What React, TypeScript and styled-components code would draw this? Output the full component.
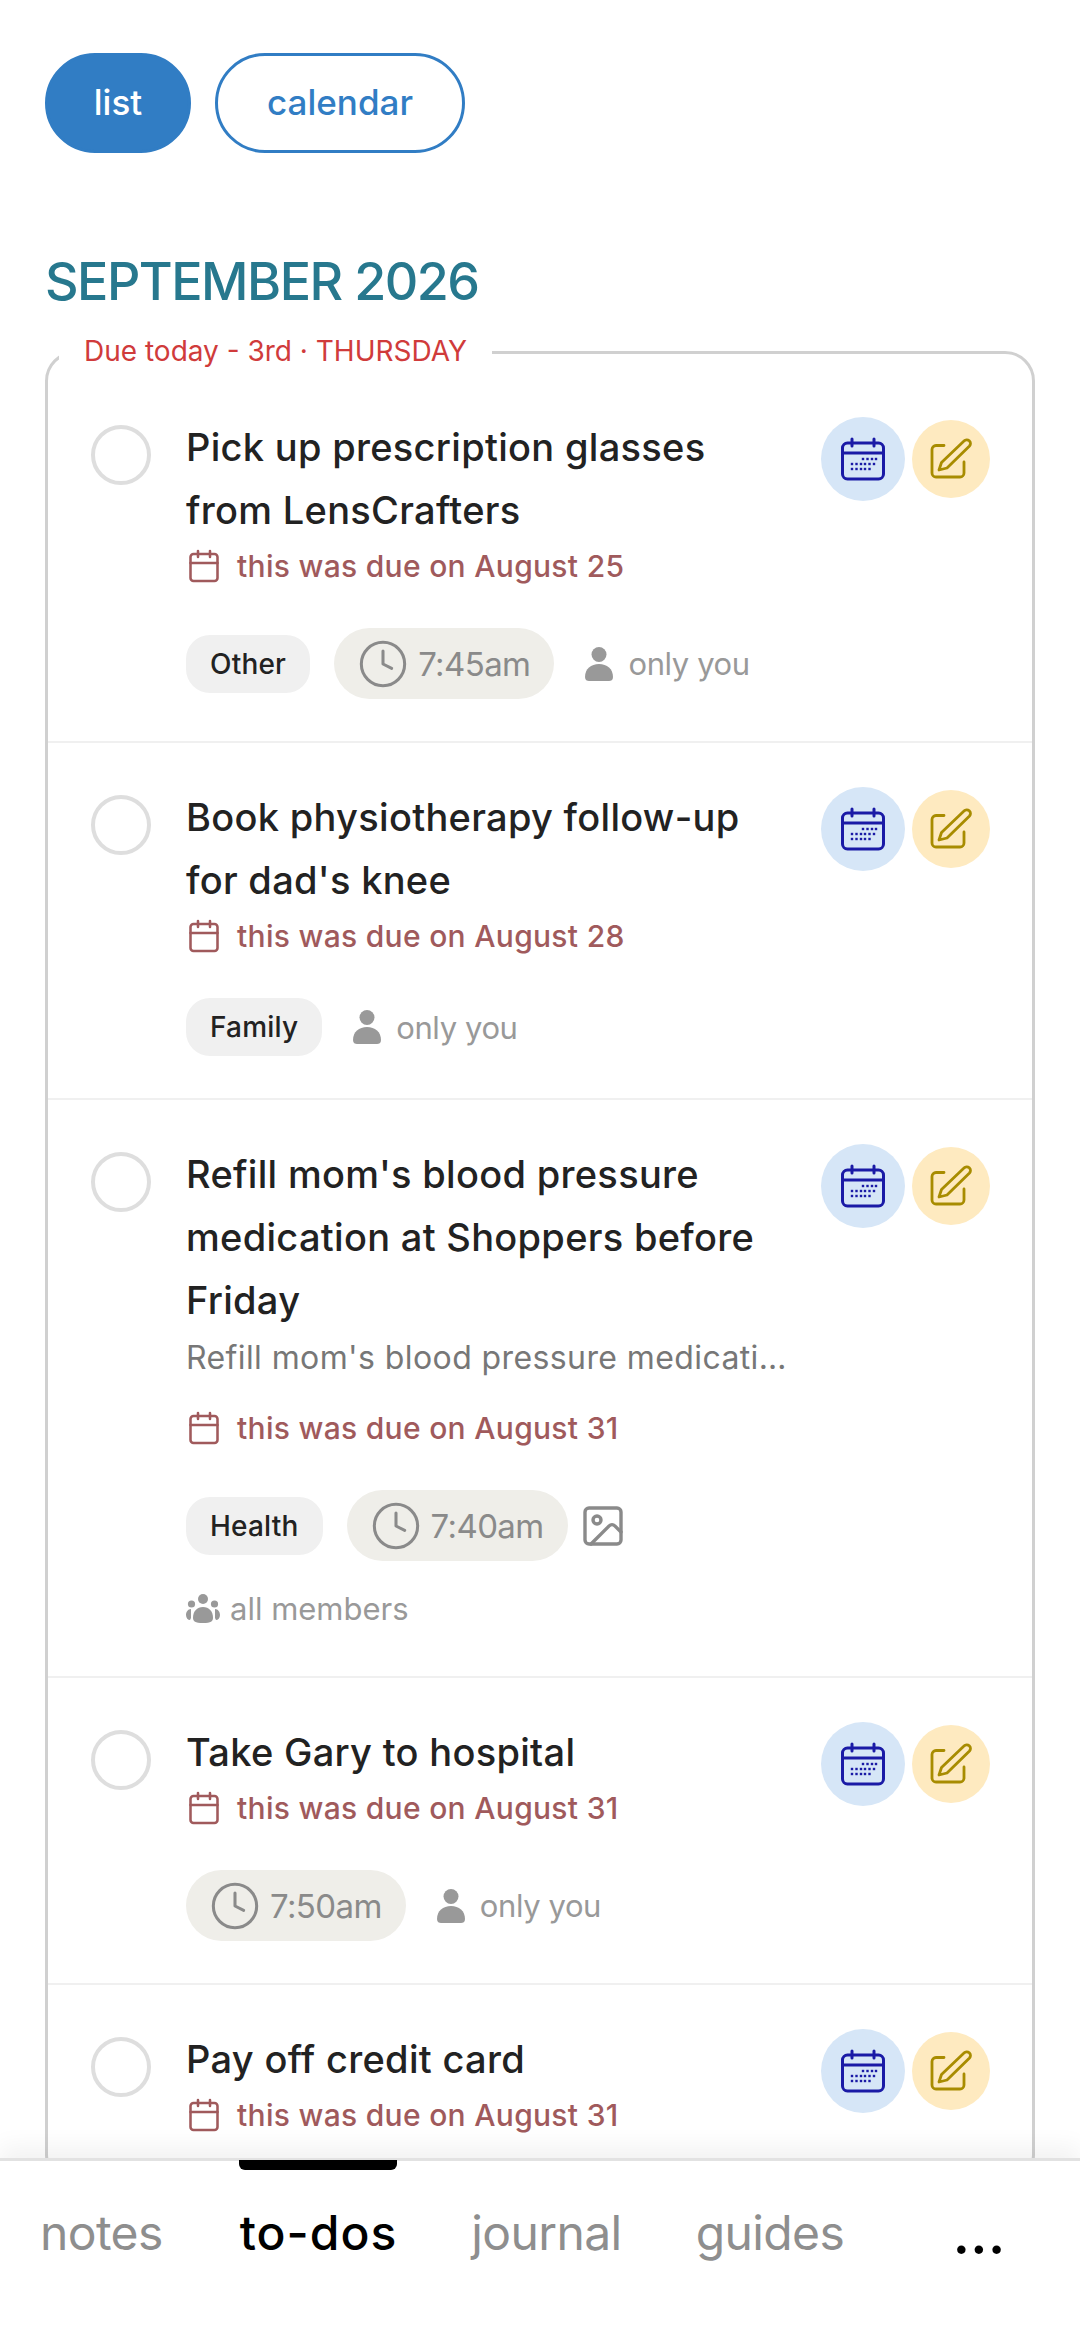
import styled, { createGlobalStyle } from "styled-components";
import { Calendar, Clock, Image as ImageIcon } from "lucide-react";

const GlobalStyle = createGlobalStyle`
    html, body {
        margin: 0;
        padding: 0;
        background: #fff;
    }
    * {
        box-sizing: border-box;
    }
`;

const Screen = styled.div`
    width: 1080px;
    height: 2340px;
    display: flex;
    flex-direction: column;
    overflow: hidden;
    font-family: Inter, "Noto Sans", sans-serif;
    color: #222;
`;

const Content = styled.main`
    flex: 1;
    min-height: 0;
    overflow: hidden;
    padding: 53px 45px 0 45px;
`;

const Toggle = styled.div`
    display: flex;
    gap: 24px;
`;

const ToggleButton = styled.div<{ $active?: boolean }>`
    height: 100px;
    width: ${(p) => (p.$active ? "146px" : "250px")};
    padding-bottom: 2px;
    display: flex;
    align-items: center;
    justify-content: center;
    border-radius: 50px;
    border: 3px solid #317dc4;
    background: ${(p) => (p.$active ? "#317dc4" : "#fff")};
    color: ${(p) => (p.$active ? "#fff" : "#317dc4")};
    font-size: 35px;
    font-weight: 500;
`;

const MonthTitle = styled.h2`
    margin: 99px 0 0;
    height: 60px;
    line-height: 60px;
    font-size: 52px;
    font-weight: 500;
    color: #27788e;
    letter-spacing: -1.5px;
`;

const Card = styled.section`
    position: relative;
    margin-top: 39px;
    border: 3px solid #d0d0d0;
    border-radius: 30px;
    padding-top: 19px;
`;

const CardLegend = styled.div`
    position: absolute;
    top: -22px;
    left: 11px;
    padding: 0 25px;
    background: #fff;
    font-size: 28px;
    line-height: 38px;
    color: #d03b3b;
`;

const Row = styled.article`
    display: flex;
    padding: 43px 42px 42px 43px;
    border-top: 2px solid #f0f0f0;

    &:first-of-type {
        border-top: none;
    }
`;

const Check = styled.div`
    flex: none;
    width: 60px;
    height: 60px;
    margin-top: 9px;
    border: 4px solid #dedede;
    border-radius: 50%;
`;

const Body = styled.div`
    flex: 1;
    min-width: 0;
    margin-left: 35px;
`;

const Title = styled.h3`
    margin: 0;
    font-size: 38px;
    line-height: 63px;
    font-weight: 500;
    color: #222;
    letter-spacing: 0.3px;
    width: 600px;
`;

const Note = styled.p`
    margin: 0 0 20px;
    font-size: 32px;
    line-height: 52px;
    color: #777;
    letter-spacing: 0.4px;
    max-width: 604px;
    white-space: nowrap;
    overflow: hidden;
    text-overflow: ellipsis;
`;

const Due = styled.div`
    display: flex;
    align-items: center;
    gap: 15px;
    height: 48px;
    font-size: 30px;
    font-weight: 500;
    color: #a05a5c;
    letter-spacing: 0.3px;
`;

const Meta = styled.div`
    display: flex;
    align-items: center;
    gap: 24px;
    margin-top: 38px;
`;

const Tag = styled.span`
    height: 58px;
    padding: 0 24px;
    display: inline-flex;
    align-items: center;
    border-radius: 24px;
    background: #f0f0f0;
    font-size: 28px;
    font-weight: 500;
    color: #222;
    letter-spacing: 0.2px;
`;

const TimePill = styled.span`
    height: 71px;
    padding: 0 24px 0 23px;
    display: inline-flex;
    align-items: center;
    gap: 9px;
    border-radius: 36px;
    background: #efeee9;
    font-size: 33px;
    color: #8a8a8a;
    letter-spacing: -0.6px;
`;

const Attachment = styled(ImageIcon)`
    margin-left: -13px;
    color: #8a8a8a;
`;

const Audience = styled.span`
    display: inline-flex;
    align-items: center;
    gap: 14px;
    margin-left: 6px;
    font-size: 31px;
    color: #999;
    letter-spacing: -0.4px;
`;

const Members = styled(Audience)`
    display: flex;
    margin: 25px 0 3px;
    height: 45px;
    gap: 10px;
    letter-spacing: 0;
`;

const Actions = styled.div`
    flex: none;
    display: flex;
    align-items: center;
    align-self: flex-start;
    gap: 7px;
    margin-top: 1px;
`;

const ActionButton = styled.div<{ $tone: "blue" | "yellow" }>`
    width: ${(p) => (p.$tone === "blue" ? "84px" : "78px")};
    height: ${(p) => (p.$tone === "blue" ? "84px" : "78px")};
    display: flex;
    align-items: center;
    justify-content: center;
    border-radius: 50%;
    background: ${(p) => (p.$tone === "blue" ? "#d6e6f7" : "#feeac0")};
    color: ${(p) => (p.$tone === "blue" ? "#1a1aa6" : "#a88c00")};
`;

const BottomNav = styled.nav`
    position: relative;
    flex: none;
    height: 182px;
    display: flex;
    align-items: flex-start;
    padding: 39px 74px 0 40px;
    background: #fff;
    border-top: 3px solid #e2e2e2;
    box-shadow: 0 -12px 22px rgba(0, 0, 0, 0.05);
`;

const NavItem = styled.span<{ $active?: boolean }>`
    position: relative;
    margin-left: ${(p) => (p.$active ? "3px" : "0")};
    margin-right: 74px;
    font-size: 48px;
    line-height: 66px;
    font-weight: ${(p) => (p.$active ? 500 : 400)};
    letter-spacing: ${(p) => (p.$active ? "1px" : "-0.6px")};
    color: ${(p) => (p.$active ? "#000" : "#8e8e8e")};

    ${(p) =>
        p.$active &&
        `
        &::before {
            content: "";
            position: absolute;
            top: -40px;
            left: -1px;
            right: 0;
            height: 10px;
            background: #000;
            border-radius: 0 0 6px 6px;
        }
    `}
`;

const NavMore = styled.span`
    margin-left: auto;
    font-size: 50px;
    line-height: 66px;
    font-weight: 700;
    color: #000;
    letter-spacing: 1px;
    padding-top: 3px;
`;

const DateCalendarIcon = () => (
    <svg width="46" height="46" viewBox="0 0 46 46" fill="none">
        <path d="M12 3v7M34 3v7" stroke="currentColor" strokeWidth="3" strokeLinecap="round" />
        <rect x="2.5" y="7" width="41" height="36" rx="5" stroke="currentColor" strokeWidth="3" />
        <path d="M3 17h40" stroke="currentColor" strokeWidth="3" />
        <g fill="currentColor">
            {[
                [23, 23], [27.5, 23], [32, 23], [36, 23],
                [12, 28], [16.5, 28], [21, 28], [25, 28], [29.5, 28], [34, 28],
                [12, 33], [16.5, 33], [21, 33], [25, 33], [29.5, 33],
            ].map(([x, y]) => (
                <rect key={`${x}-${y}`} x={x - 1.2} y={y - 1.2} width="2.4" height="2.4" />
            ))}
        </g>
    </svg>
);

const EditIcon = () => (
    <svg width="48" height="42" viewBox="0 -2 48 42" fill="none" stroke="currentColor" strokeWidth="2.8" strokeLinejoin="round">
        <path d="M17 5.5H9a4 4 0 0 0-4 4V33a4 4 0 0 0 4 4h24a4 4 0 0 0 4-4V22" strokeLinecap="round" />
        <path d="M12 30l2.5-7.5L37 1a3.6 3.6 0 0 1 5.5 5L20 28z" />
    </svg>
);

const PersonIcon = () => (
    <svg width="30" height="36" viewBox="0 0 30 36" fill="#999">
        <circle cx="15" cy="8.5" r="7.5" />
        <path d="M1 31c0-8 6-13 14-13s14 5 14 13c0 3-2 4-4 4H5c-2 0-4-1-4-4z" />
    </svg>
);

const GroupIcon = () => (
    <svg width="34" height="32" viewBox="0 0 34 32" fill="#999">
        <circle cx="17" cy="6" r="5" />
        <circle cx="5.5" cy="11" r="3.6" />
        <circle cx="28.5" cy="11" r="3.6" />
        <path d="M7 25c0-7 4-11 10-11s10 4 10 11c0 3-2 5-10 5s-10-2-10-5z" />
        <path d="M0 22c0-3 2-6 5-6v9l-1 2c-2 0-4-2-4-5zM34 22c0-3-2-6-5-6v9l1 2c2 0 4-2 4-5z" />
    </svg>
);

type Todo = {
    title: string;
    due: string;
    note?: string;
    tag?: string;
    time?: string;
    image?: boolean;
    audience?: "you" | "all";
};

const todos: Todo[] = [
    { title: "Pick up prescription glasses from LensCrafters", due: "August 25", tag: "Other", time: "7:45am", audience: "you" },
    { title: "Book physiotherapy follow-up for dad's knee", due: "August 28", tag: "Family", audience: "you" },
    {
        title: "Refill mom's blood pressure medication at Shoppers before Friday",
        note: "Refill mom's blood pressure medication at Shoppers before Friday",
        due: "August 31",
        tag: "Health",
        time: "7:40am",
        image: true,
        audience: "all",
    },
    { title: "Take Gary to hospital", due: "August 31", time: "7:50am", audience: "you" },
    { title: "Pay off credit card", due: "August 31" },
];

const TodoRow = ({ todo }: { todo: Todo }) => (
    <Row>
        <Check />
        <Body>
            <Title>{todo.title}</Title>
            {todo.note && <Note>{todo.note}</Note>}
            <Due>
                <Calendar size={36} strokeWidth={1.7} />
                this was due on {todo.due}
            </Due>
            {todo.audience && (
                <Meta>
                    {todo.tag && <Tag>{todo.tag}</Tag>}
                    {todo.time && (
                        <TimePill>
                            <Clock size={52} strokeWidth={1.4} />
                            {todo.time}
                        </TimePill>
                    )}
                    {todo.image && <Attachment size={48} strokeWidth={1.7} />}
                    {todo.audience === "you" && (
                        <Audience>
                            <PersonIcon />
                            only you
                        </Audience>
                    )}
                </Meta>
            )}
            {todo.audience === "all" && (
                <Members>
                    <GroupIcon />
                    all members
                </Members>
            )}
        </Body>
        <Actions>
            <ActionButton $tone="blue">
                <DateCalendarIcon />
            </ActionButton>
            <ActionButton $tone="yellow">
                <EditIcon />
            </ActionButton>
        </Actions>
    </Row>
);

export default function App() {
    return (
        <Screen>
            <GlobalStyle />
            <Content>
                <Toggle>
                    <ToggleButton $active>list</ToggleButton>
                    <ToggleButton>calendar</ToggleButton>
                </Toggle>
                <MonthTitle>SEPTEMBER 2026</MonthTitle>
                <Card>
                    <CardLegend>Due today - 3rd · THURSDAY</CardLegend>
                    {todos.map((todo) => (
                        <TodoRow key={todo.title} todo={todo} />
                    ))}
                </Card>
            </Content>
            <BottomNav>
                <NavItem>notes</NavItem>
                <NavItem $active>to-dos</NavItem>
                <NavItem>journal</NavItem>
                <NavItem>guides</NavItem>
                <NavMore>...</NavMore>
            </BottomNav>
        </Screen>
    );
}
